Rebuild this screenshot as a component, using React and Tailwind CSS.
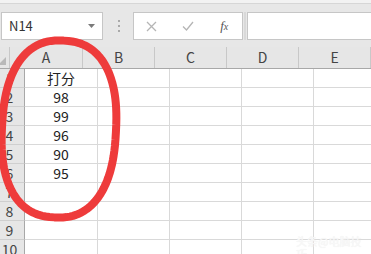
import React from "react";

const cols = [
  { l: "A", w: "w-[73px]" },
  { l: "B", w: "w-[72px]" },
  { l: "C", w: "w-[72px]" },
  { l: "D", w: "w-[72px]" },
  { l: "E", w: "w-[72px]" },
];

const data = { 1: "打分", 2: "98", 3: "99", 4: "96", 5: "90", 6: "95" };

function superEllipse(cx, cy, a, b, n, steps = 120) {
  const pts = [];
  for (let i = 0; i < steps; i++) {
    const t = (i / steps) * Math.PI * 2;
    const c = Math.cos(t);
    const s = Math.sin(t);
    const x = cx + a * Math.sign(c) * Math.pow(Math.abs(c), 2 / n);
    const y = cy + b * Math.sign(s) * Math.pow(Math.abs(s), 2 / n);
    pts.push(`${x.toFixed(2)} ${y.toFixed(2)}`);
  }
  return "M" + pts.join(" L") + " Z";
}

export default function App() {
  const rows = [1, 2, 3, 4, 5, 6, 7, 8, 9, 10];
  const ring = superEllipse(59, 129, 57, 88.5, 2.4);
  return (
    <div
      className="relative w-[371px] h-[254px] overflow-hidden bg-white"
      style={{ fontFamily: '"Noto Sans CJK SC", "Noto Sans", sans-serif' }}
    >
      {/* Top formula area */}
      <div className="h-[47px] bg-[#e7e7e7] border-t-[3px] border-[#f2f2f2] flex flex-col">
        <div className="h-px bg-[#d6d6d6]" />
        <div className="flex items-start pt-[8px]">
          <div className="ml-[1px] w-[102px] h-[28px] bg-white border border-[#c6c6c6] flex items-center pl-[7px] relative text-[13px] text-[#333]">
            N14
            <svg className="absolute right-[7px] top-[11px]" width="7" height="4" viewBox="0 0 7 4">
              <path d="M0 0 L7 0 L3.5 4 Z" fill="#7a7a7a" />
            </svg>
          </div>
          <div className="w-[30px] h-[28px] flex flex-col items-center justify-center gap-[3px] pl-[1px]">
            <span className="w-[2px] h-[2px] bg-[#a9a9a9]" />
            <span className="w-[2px] h-[2px] bg-[#a9a9a9]" />
            <span className="w-[2px] h-[2px] bg-[#a9a9a9]" />
          </div>
          <div className="w-[110px] h-[28px] bg-white border border-[#c6c6c6] flex items-center">
            <span className="w-[36px] flex justify-center">
              <svg width="11" height="11" viewBox="0 0 11 11">
                <path d="M1 1 L10 10 M10 1 L1 10" stroke="#b5b5b5" strokeWidth="1.3" fill="none" />
              </svg>
            </span>
            <span className="w-[37px] flex justify-center">
              <svg width="12" height="10" viewBox="0 0 12 10">
                <path d="M1 5.5 L4.5 9 L11 1" stroke="#b5b5b5" strokeWidth="1.3" fill="none" />
              </svg>
            </span>
            <span
              className="w-[36px] flex justify-center text-[13px] italic text-[#555]"
              style={{ fontFamily: '"Liberation Serif", serif' }}
            >
              f<span className="text-[10px] mt-[3px]">x</span>
            </span>
          </div>
          <div className="w-[4px] h-[28px] flex justify-center">
            <span className="w-[2px] h-[28px] bg-[#d9d9d9]" />
          </div>
          <div className="flex-1 h-[28px] bg-white border border-r-0 border-[#c6c6c6]" />
        </div>
      </div>

      {/* Column headers */}
      <div className="flex h-[22px] bg-[#e6e6e6] border-b border-[#a8a8a8]">
        <div className="w-[25px] border-r border-[#c8c8c8] relative">
          <svg className="absolute right-[3px] bottom-[3px]" width="8" height="8" viewBox="0 0 8 8">
            <path d="M8 0 L8 8 L0 8 Z" fill="#b9b9b9" />
          </svg>
        </div>
        {cols.map((c) => (
          <div
            key={c.l}
            className={`${c.w} shrink-0 border-r border-[#c8c8c8] flex items-center justify-center text-[14px] text-[#444]`}
          >
            {c.l}
          </div>
        ))}
      </div>

      {/* Rows */}
      {rows.map((r) => (
        <div key={r} className="flex h-[19px]">
          <div className="w-[25px] shrink-0 bg-[#e6e6e6] border-r border-b border-r-[#a8a8a8] border-b-[#cfcfcf] flex items-center justify-center pr-[5px] text-[14px] text-[#444]">
            {r}
          </div>
          {cols.map((c, i) => (
            <div
              key={c.l}
              className={`${c.w} shrink-0 border-r border-b border-[#d9d9d9] flex items-center justify-center text-[14px] text-[#222]`}
            >
              {i === 0 ? data[r] || "" : ""}
            </div>
          ))}
        </div>
      ))}

      {/* Red hand-drawn ring */}
      <svg className="absolute left-0 top-0 pointer-events-none" width="371" height="254" viewBox="0 0 371 254">
        <path
          d={ring}
          fill="none"
          stroke="#ee3b3b"
          strokeWidth="8"
          strokeLinejoin="round"
          transform="rotate(3 59 129)"
        />
      </svg>

      {/* Watermark */}
      <div
        className="absolute left-[296px] top-[235px] text-[11px] leading-[12px] text-[#f8f8f8] pointer-events-none"
        style={{ textShadow: "0 0 1px #ebebeb" }}
      >
        头条@电脑技巧
      </div>
    </div>
  );
}
